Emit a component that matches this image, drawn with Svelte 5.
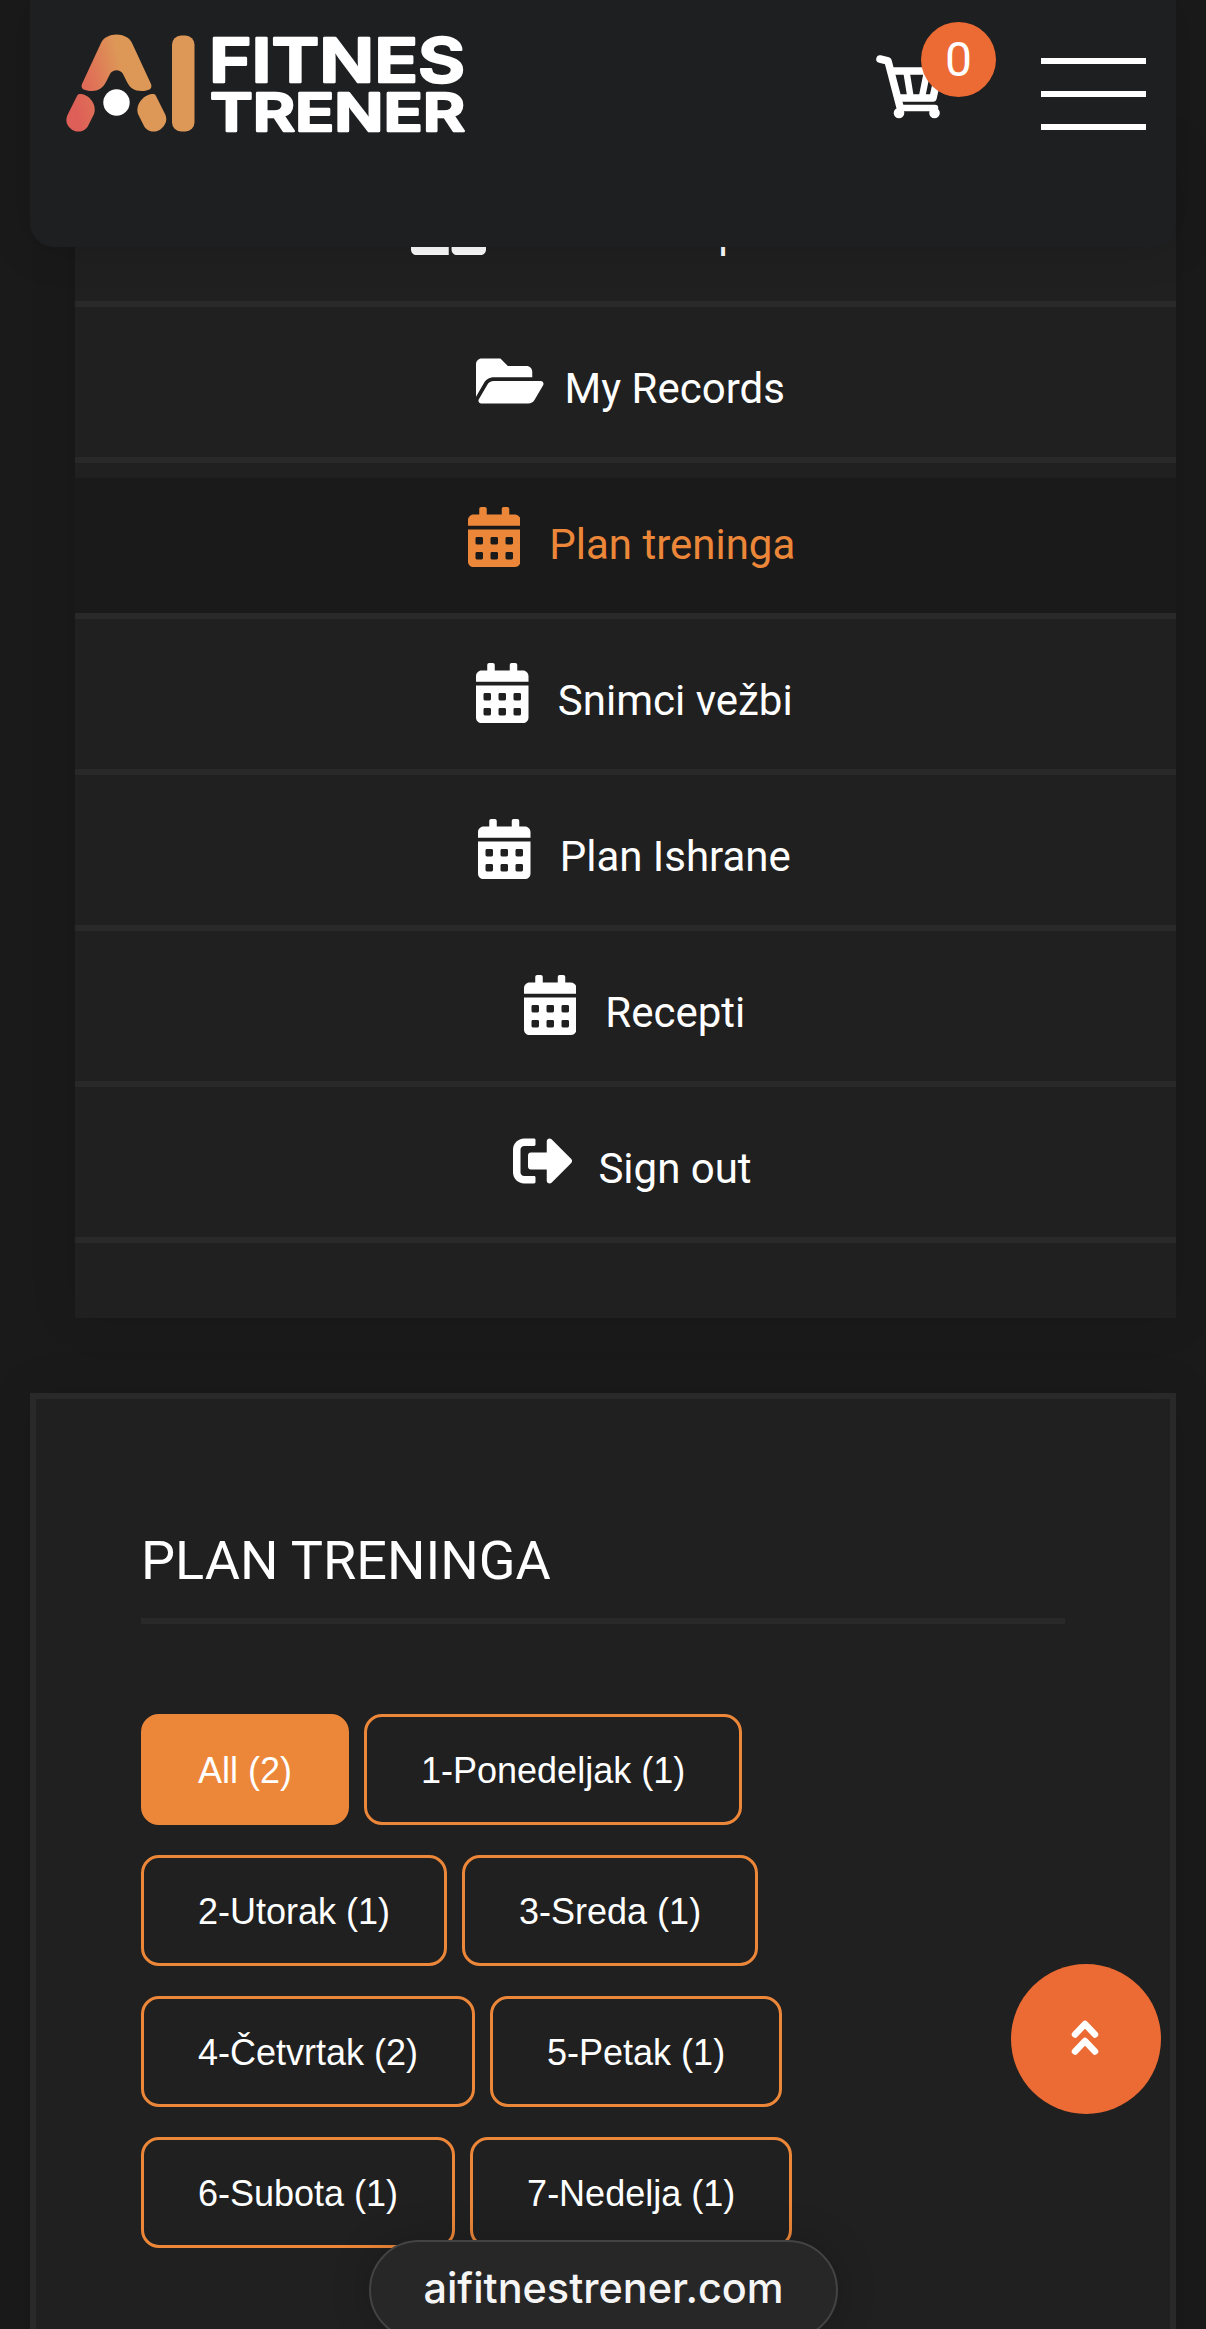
<script>
  const icons = {
    card: {
      width: 640,
      path: "M0 160a96 96 0 0 1 96-96h226v448H48c-26.500 0-48-21.500-48-48zM346 64h198a96 96 0 0 1 96 96v304c0 26.500-21.500 48-48 48H394c-26.500 0-48-21.500-48-48z",
    },
    folder: {
      width: 576,
      path: "M572.694 292.093L500.27 416.248A63.997 63.997 0 0 1 444.989 448H45.025c-18.523 0-30.064-20.093-20.731-36.093l72.424-124.155A64 64 0 0 1 152 256h399.964c18.523 0 30.064 20.093 20.73 36.093zM152 224h328v-48c0-26.510-21.490-48-48-48H272l-64-64H48C21.490 64 0 85.490 0 112v278.046l69.077-118.418C86.214 242.250 117.989 224 152 224z",
    },
    calendar: {
      width: 448,
      path: "M0 464c0 26.500 21.500 48 48 48h352c26.500 0 48-21.500 48-48V192H0v272zm320-196c0-6.600 5.400-12 12-12h40c6.600 0 12 5.400 12 12v40c0 6.600-5.400 12-12 12h-40c-6.600 0-12-5.400-12-12v-40zm0 128c0-6.600 5.400-12 12-12h40c6.600 0 12 5.400 12 12v40c0 6.600-5.400 12-12 12h-40c-6.600 0-12-5.400-12-12v-40zM192 268c0-6.600 5.400-12 12-12h40c6.600 0 12 5.400 12 12v40c0 6.600-5.400 12-12 12h-40c-6.600 0-12-5.400-12-12v-40zm0 128c0-6.600 5.400-12 12-12h40c6.600 0 12 5.400 12 12v40c0 6.600-5.400 12-12 12h-40c-6.600 0-12-5.400-12-12v-40zM64 268c0-6.600 5.400-12 12-12h40c6.600 0 12 5.400 12 12v40c0 6.600-5.400 12-12 12H76c-6.600 0-12-5.400-12-12v-40zm0 128c0-6.600 5.400-12 12-12h40c6.600 0 12 5.400 12 12v40c0 6.600-5.400 12-12 12H76c-6.600 0-12-5.400-12-12v-40zM400 64h-48V16c0-8.800-7.200-16-16-16h-32c-8.800 0-16 7.200-16 16v48H160V16c0-8.800-7.200-16-16-16h-32c-8.800 0-16 7.200-16 16v48H48C21.500 64 0 85.500 0 112v48h448v-48c0-26.500-21.500-48-48-48z",
    },
    signout: {
      width: 512,
      path: "M497 273L329 441c-15 15-41 4.500-41-17v-96H152c-13.300 0-24-10.700-24-24v-96c0-13.300 10.700-24 24-24h136V88c0-21.400 25.900-32 41-17l168 168c9.300 9.400 9.300 24.600 0 34zM192 436v-40c0-6.600-5.400-12-12-12H96c-17.700 0-32-14.300-32-32V160c0-17.700 14.300-32 32-32h84c6.600 0 12-5.400 12-12V76c0-6.600-5.400-12-12-12H96c-53 0-96 43-96 96v192c0 53 43 96 96 96h84c6.600 0 12-5.400 12-12z",
    },
  };

  const menu = [
    { label: "Membership Level", icon: "card" },
    { label: "My Records", icon: "folder" },
    { label: "Plan treninga", icon: "calendar" },
    { label: "Snimci vežbi", icon: "calendar" },
    { label: "Plan Ishrane", icon: "calendar" },
    { label: "Recepti", icon: "calendar" },
    { label: "Sign out", icon: "signout" },
  ];

  const filters = [
    { label: "All", count: 2 },
    { label: "1-Ponedeljak", count: 1 },
    { label: "2-Utorak", count: 1 },
    { label: "3-Sreda", count: 1 },
    { label: "4-Četvrtak", count: 2 },
    { label: "5-Petak", count: 1 },
    { label: "6-Subota", count: 1 },
    { label: "7-Nedelja", count: 1 },
  ];

  let current = $state("Plan treninga");
  let filter = $state("All");
</script>

<div class="page">
  <header>
    <svg class="logo" viewBox="0 0 400 100" role="img" aria-label="AI Fitnes Trener">
      <defs>
        <linearGradient id="warm" gradientUnits="userSpaceOnUse" x1="8" y1="70" x2="62" y2="56">
          <stop offset="0" stop-color="#dd5f57" />
          <stop offset="0.45" stop-color="#df7457" />
          <stop offset="1" stop-color="#dd9857" />
        </linearGradient>
      </defs>
      <g fill="url(#warm)">
        <path d="M35 9C40 -2.500 61 -2.500 66 9L85 50C87 55 82 57 76 57C68 57 64 54 61 48L57 40C54 35 47 35 44 40L40 48C37 54 32 57 26 57C19 57 14 55 16 50Z" />
        <path d="M15 60C24 61 31 71 28 80L22 92C19 98 10 100 4 94C-1 89 0 84 2 80L11 62C12 60 13 60 15 60Z" />
        <path d="M86 60C77 61 69 71 72 80L78 92C81 98 90 100 96 94C101 89 101 84 99 80L90 62C89 60 88 60 86 60Z" />
      </g>
      <rect x="106" y="1.500" width="22.500" height="96" rx="9" fill="#dd9857" />
      <circle cx="50.500" cy="68.500" r="13.200" fill="#fff" />
      <text x="143" y="47.500" font-size="61" textLength="256" lengthAdjust="spacingAndGlyphs">FITNES</text>
      <text x="144" y="96.500" font-size="52" textLength="255" lengthAdjust="spacingAndGlyphs">TRENER</text>
    </svg>

    <div class="actions">
      <div class="cart">
        <svg viewBox="0 0 64 64" fill="none" stroke="#fff" stroke-linecap="round" stroke-linejoin="round">
          <path stroke-width="7.500" d="M4 4l8 2 12 46" />
          <path stroke-width="7.500" d="M17 16h46l-6 27H23" />
          <path stroke-width="6.500" d="M30.500 17l4 25M51 17l-5 25M26 53h33" />
          <circle cx="23" cy="58" r="5.300" fill="#fff" stroke="none" />
          <circle cx="58.500" cy="58" r="5.300" fill="#fff" stroke="none" />
        </svg>
        <span class="badge">0</span>
      </div>
      <button class="burger" aria-label="Menu">
        <span></span>
        <span></span>
        <span></span>
      </button>
    </div>
  </header>

  <nav>
    {#each menu as item}
      <div class="row">
        <button
          class="link {item.icon}"
          class:active={current === item.label}
          onclick={() => (current = item.label)}
        >
          <svg viewBox="0 0 {icons[item.icon].width} 512" fill="currentColor">
            <path d={icons[item.icon].path} />
          </svg>
          <span>{item.label}</span>
        </button>
      </div>
    {/each}
  </nav>

  <section>
    <h2>PLAN TRENINGA</h2>
    <div class="filters">
      {#each filters as f}
        <button class:selected={filter === f.label} onclick={() => (filter = f.label)}>
          {f.label} ({f.count})
        </button>
      {/each}
    </div>
  </section>

  <button class="to-top" aria-label="Back to top">
    <svg viewBox="0 0 28 36" fill="none" stroke="#fff" stroke-width="6.500" stroke-linecap="round" stroke-linejoin="round">
      <path d="M4 14.500L14 4l10 10.500M4 31.500L14 21l10 10.500" />
    </svg>
  </button>
  <div class="address">aifitnestrener.com</div>
</div>

<style>
  :global(body) {
    background: #1a1a1a;
  }

  .page {
    position: relative;
    box-sizing: border-box;
    height: 2329px;
    padding: 151px 30px 0;
    overflow: hidden;
    background: #1a1a1a;
    color: #fff;
    font-family: Roboto, sans-serif;
  }
  button {
    font: inherit;
    color: inherit;
    background: none;
    border: 0;
    padding: 0;
  }

  header {
    position: absolute;
    z-index: 2;
    top: 0;
    left: 30px;
    right: 30px;
    height: 247px;
    box-sizing: border-box;
    padding: 34px 30px 0 36px;
    display: flex;
    justify-content: space-between;
    align-items: flex-start;
    background: #1e1f21;
    border-radius: 0 0 24px 24px;
    box-shadow: 0 0 45px rgba(0, 0, 0, 0.15);
  }
  .logo {
    width: 400px;
    height: 100px;
    overflow: visible;
  }
  .logo text {
    font-family: Inter, sans-serif;
    font-weight: 600;
    fill: #fff;
    stroke: #fff;
    stroke-width: 2.5px;
    stroke-linejoin: round;
  }
  .actions {
    display: flex;
    gap: 101px;
  }
  .cart {
    position: relative;
    width: 64px;
    height: 64px;
    margin-top: 21px;
  }
  .cart svg {
    display: block;
  }
  .badge {
    position: absolute;
    top: -33px;
    left: 45px;
    width: 75px;
    height: 75px;
    border-radius: 50%;
    background: #ec6a33;
    font-size: 48px;
    line-height: 75px;
    text-align: center;
  }
  .burger {
    display: flex;
    flex-direction: column;
    gap: 27px;
    width: 105px;
    margin-top: 24px;
  }
  .burger span {
    height: 6px;
    background: #fff;
  }

  nav {
    margin-left: 45px;
    padding-bottom: 75px;
    background: #202020;
    box-shadow: 0 0 45px rgba(0, 0, 0, 0.1);
  }
  .row {
    padding-top: 15px;
    border-bottom: 6px solid #292929;
  }
  .link {
    display: flex;
    justify-content: center;
    align-items: center;
    width: 100%;
    height: 135px;
    padding-left: 18px;
    font-size: 42px;
  }
  .link svg {
    height: 60px;
    margin: 0 29px 18px 0;
  }
  .link span {
    margin-bottom: 2px;
  }
  .link.card,
  .link.folder {
    padding-left: 10px;
  }
  .link.card svg,
  .link.folder svg {
    margin-right: 21px;
  }
  .link.signout {
    padding-left: 14px;
  }
  .link.signout svg {
    margin-right: 25px;
  }
  .link.active {
    padding-left: 12px;
    background: #1a1a1a;
    color: #ec8739;
  }

  section {
    height: 1000px;
    margin-top: 75px;
    padding: 135px 105px 0;
    border: 6px solid #292929;
    background: #202020;
    box-shadow: 0 0 45px rgba(0, 0, 0, 0.1);
  }
  h2 {
    margin: 0 0 90px;
    height: 84px;
    border-bottom: 6px solid #292929;
    font-size: 54px;
    font-weight: 400;
    line-height: 54px;
  }
  .filters {
    display: flex;
    flex-wrap: wrap;
  }
  .filters button {
    box-sizing: border-box;
    height: 111px;
    margin: 0 15px 30px 0;
    padding: 3px 54px 0;
    border: 3px solid #ec8739;
    border-radius: 18px;
    font-family: "Liberation Sans", Arial, sans-serif;
    font-size: 36px;
  }
  .filters .selected {
    background: #ec8739;
  }

  .to-top {
    position: absolute;
    top: 1964px;
    right: 45px;
    display: flex;
    justify-content: center;
    align-items: center;
    width: 150px;
    height: 150px;
    padding: 0 3px 3px 0;
    border-radius: 50%;
    background: #ec6a33;
  }
  .to-top svg {
    width: 28px;
    height: 36px;
  }
  .address {
    position: absolute;
    top: 2240px;
    left: 369px;
    box-sizing: border-box;
    width: 469px;
    height: 100px;
    border: 2px solid #434343;
    border-radius: 50px;
    background: #272727;
    box-shadow: 0 0 40px rgba(0, 0, 0, 0.2);
    color: #f5f5f5;
    font-family: Inter, sans-serif;
    font-size: 41.4px;
    font-weight: 500;
    line-height: 92px;
    text-align: center;
  }
</style>
